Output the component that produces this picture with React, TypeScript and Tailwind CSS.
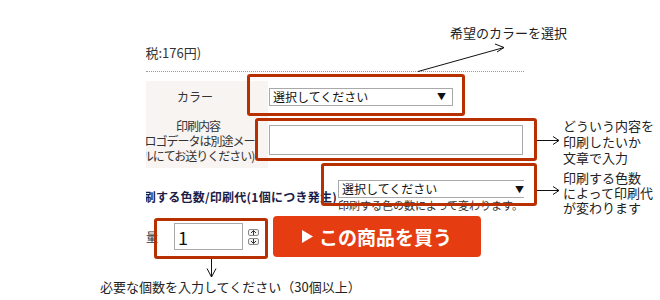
import React from "react";

function FakeSelect({ className }: { className: string }) {
  return (
    <div
      className={`flex h-[18px] items-center justify-between border border-[#a9a9a9] bg-white pl-[3px] pr-[6px] text-[12px] leading-none text-[#111] ${className}`}
    >
      <span>選択してください</span>
      <span className="text-[9px]">▼</span>
    </div>
  );
}

function SpinButton({ up }: { up: boolean }) {
  return (
    <span className="flex h-[7px] w-[11px] items-center justify-center rounded-[2px] border border-[#8a8a8a] bg-[#f3f3f3]">
      <svg width="7" height="5" viewBox="0 0 7 5">
        {up ? (
          <path d="M3.5 0.5V5M1 3L3.5 0.5L6 3" stroke="#333" fill="none" strokeWidth="1" />
        ) : (
          <path d="M3.5 0V4.5M1 2L3.5 4.5L6 2" stroke="#333" fill="none" strokeWidth="1" />
        )}
      </svg>
    </span>
  );
}

function OrderForm() {
  return (
    <div className="ml-[146px] w-[378px] overflow-hidden pt-[45px] text-[#333]">
      <p className="-ml-[5px] h-4 whitespace-nowrap text-[13px] leading-4">(税:176円)</p>
      <div className="mt-[10px] border-t border-dotted border-[#9a9a9a]" />

      <div className="mt-[9px]">
        <div className="flex h-[31px]">
          <div className="-ml-[24px] flex w-[146px] shrink-0 items-center justify-center bg-[#f7f4f2] text-[12px]">
            カラー
          </div>
          <div className="flex items-center pl-px">
            <FakeSelect className="w-[184px]" />
          </div>
        </div>
        <div className="flex h-[56px]">
          <div className="-ml-[24px] flex w-[146px] shrink-0 items-center justify-center bg-[#f7f4f2] pl-[6px]">
            <p className="whitespace-nowrap text-center text-[12px] leading-[15px] tracking-[-1px]">
              印刷内容
              <br />
              (ロゴデータは別途メー
              <br />
              ルにてお送りください)
            </p>
          </div>
          <div className="flex items-center pl-px">
            <div className="h-[30px] w-[254px] border border-[#a9a9a9] bg-white" />
          </div>
        </div>
      </div>

      <div className="flex items-center pt-[12px]">
        <div className="flex w-[192px] shrink-0 justify-end pr-px">
          <span className="whitespace-nowrap text-[12px] font-bold leading-4 tracking-[0.25px] text-[#1c1c48]">
            印刷する色数/印刷代(1個につき発生)
          </span>
        </div>
        <div className="flex flex-col">
          <FakeSelect className="w-[193px]" />
          <p className="whitespace-nowrap text-[11px] leading-[15px]">印刷する色の数によって変わります。</p>
        </div>
      </div>

      <div className="mt-[3px] flex h-[41px] items-center">
        <span className="-ml-[12px] whitespace-nowrap text-[12px]">数量</span>
        <div className="ml-[16px] flex h-[27px] w-[69px] items-center border border-[#a9a9a9] bg-white pl-[3px] text-[18px] leading-none text-[#111]">
          1
        </div>
        <div className="ml-[5px] flex flex-col gap-[2px]">
          <SpinButton up />
          <SpinButton up={false} />
        </div>
        <button className="ml-[14px] flex h-[41px] w-[208px] items-center justify-center gap-[6px] rounded-[4px] bg-[#e53c12] text-[19px] font-bold text-white">
          <svg width="11" height="13" viewBox="0 0 11 13">
            <polygon points="0,0 11,6.5 0,13" fill="#fff" />
          </svg>
          <span className="leading-none">この商品を買う</span>
        </button>
      </div>
    </div>
  );
}

function Annotations() {
  const box = "absolute rounded-[3px] border-[3px] border-[#b83000]";
  return (
    <>
      <div className={`${box} left-[247px] top-[74px] h-[42px] w-[218px]`} />
      <div className={`${box} left-[255px] top-[118px] h-[43px] w-[282px]`} />
      <div className={`${box} left-[321px] top-[163px] h-[43px] w-[216px]`} />
      <div className={`${box} left-[154px] top-[218px] h-[41px] w-[114px]`} />

      <svg className="absolute left-0 top-0" width="660" height="300" viewBox="0 0 660 300" fill="none" stroke="#111" strokeWidth="1">
        <path d="M418 71.5L504 47.5M495 44L504 47.5L497 52" />
        <path d="M537 140.5H559M553 136.5L559 140.5L553 144.5" />
        <path d="M537 190.5H559M553 186.5L559 190.5L553 194.5" />
        <path d="M211.5 259V277M207 268.5L211.5 277L216 268.5" />
      </svg>

      <p className="absolute left-[450px] top-[25px] whitespace-nowrap text-[13px] leading-4 text-[#222]">希望のカラーを選択</p>
      <p className="absolute left-[563px] top-[118px] whitespace-nowrap text-[13px] leading-4 text-[#222]">
        どういう内容を
        <br />
        印刷したいか
        <br />
        文章で入力
      </p>
      <p className="absolute left-[563px] top-[170px] whitespace-nowrap text-[13px] leading-[15px] text-[#222]">
        印刷する色数
        <br />
        によって印刷代
        <br />
        が変わります
      </p>
      <p className="absolute left-[100px] top-[279px] whitespace-nowrap text-[13px] leading-4 text-[#222]">
        必要な個数を入力してください（30個以上）
      </p>
    </>
  );
}

export default function App() {
  return (
    <div className="relative h-[300px] w-[660px] overflow-hidden bg-white font-['Noto_Sans_CJK_JP',sans-serif]">
      <OrderForm />
      <Annotations />
    </div>
  );
}
